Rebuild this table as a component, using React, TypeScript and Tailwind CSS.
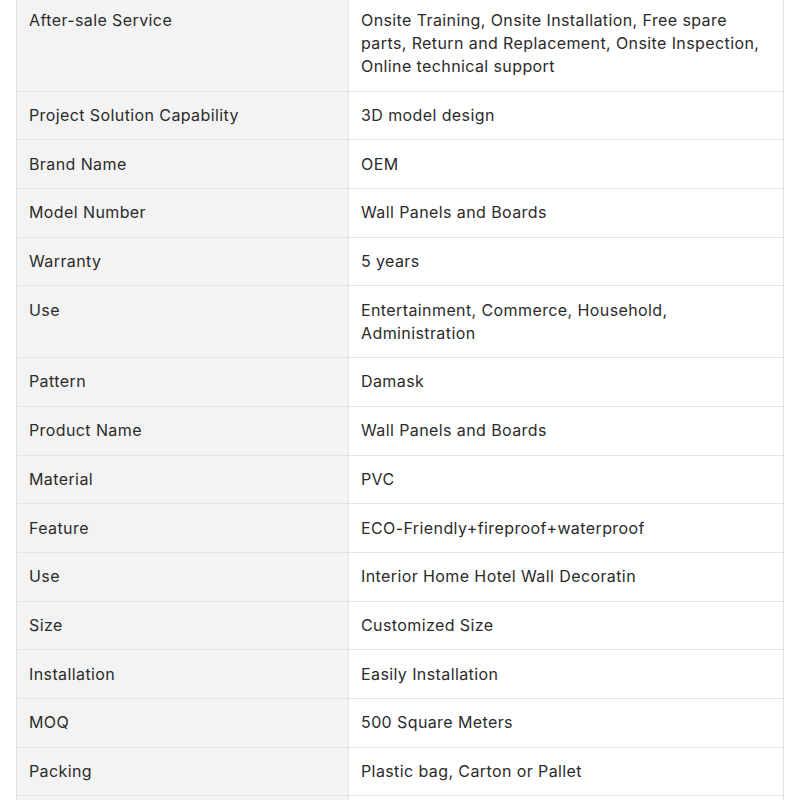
const rows: [string, string][] = [
  [
    "After-sale Service",
    "Onsite Training, Onsite Installation, Free spare parts, Return and Replacement, Onsite Inspection, Online technical support",
  ],
  ["Project Solution Capability", "3D model design"],
  ["Brand Name", "OEM"],
  ["Model Number", "Wall Panels and Boards"],
  ["Warranty", "5 years"],
  ["Use", "Entertainment, Commerce, Household, Administration"],
  ["Pattern", "Damask"],
  ["Product Name", "Wall Panels and Boards"],
  ["Material", "PVC"],
  ["Feature", "ECO-Friendly+fireproof+waterproof"],
  ["Use", "Interior Home Hotel Wall Decoratin"],
  ["Size", "Customized Size"],
  ["Installation", "Easily Installation"],
  ["MOQ", "500 Square Meters"],
  ["Packing", "Plastic bag, Carton or Pallet"],
  // next row only peeks in at the bottom edge
  ["\u00a0", "\u00a0"],
];

const App = () => {
  return (
    <div
      className="h-[800px] bg-white px-4 overflow-hidden"
      style={{ fontFamily: "Inter, 'Noto Sans', sans-serif" }}
    >
      <table className="w-[768px] border-collapse table-fixed -mt-[4px] text-[16px] leading-[23px] tracking-[0.4px] text-[#2b2b2b]">
        <colgroup>
          <col className="w-[332px]" />
          <col />
        </colgroup>
        <tbody>
          {rows.map(([label, value], i) => (
            <tr key={i}>
              <td className="border border-[#e3e3e3] bg-[#f3f3f3] px-3 py-[12.35px] align-top">
                {label}
              </td>
              <td className="border border-[#e3e3e3] bg-white px-3 py-[12.35px] align-top">
                {value}
              </td>
            </tr>
          ))}
        </tbody>
      </table>
    </div>
  );
};

export default App;
